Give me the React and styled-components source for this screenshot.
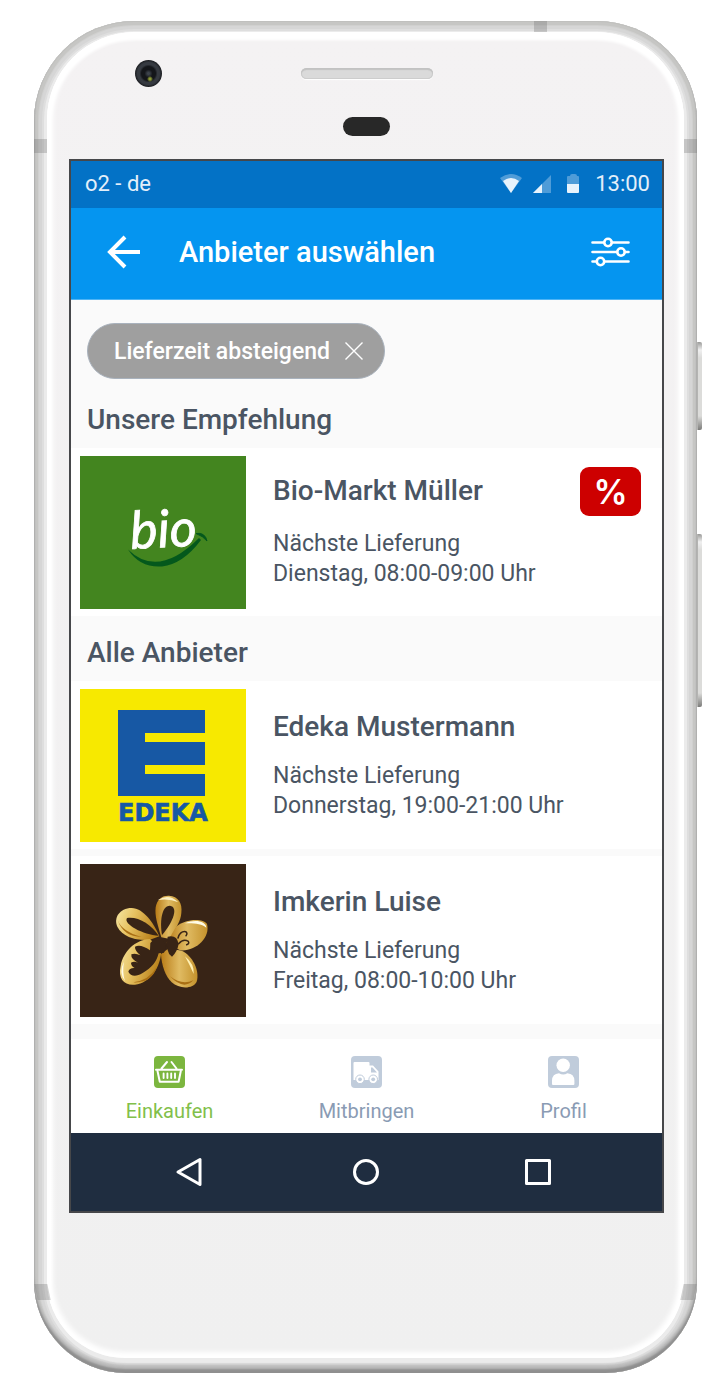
import React from 'react'
import styled, { createGlobalStyle, css } from 'styled-components'

const GlobalStyle = createGlobalStyle`
  * {
    box-sizing: border-box;
  }
  body {
    margin: 0;
    background: #fff;
    color: #4a5563;
    font-family: Roboto, 'Liberation Sans', sans-serif;
  }
  h1, h2, h3, p, ul {
    margin: 0;
    padding: 0;
    font-weight: 400;
  }
  ul {
    list-style: none;
  }
  svg {
    display: block;
  }
`

/* ---------- device ---------- */

const Phone = styled.div`
  position: relative;
  margin: 21px 23px 12px 34px;
  padding: 11px 13px 15px;
  border-radius: 100px 100px 92px 92px;
  background: #ebebeb;
  box-shadow: inset 0 -4px 2px #8f8f8f, inset 0 -8px 3px #b9b9b9,
    inset 0 0 0 1px #c0c0be, inset 0 0 0 4px #c6c6c4, inset 0 0 0 5px #d0d0cf,
    inset 0 0 0 8px #d6d6d6, inset 0 0 0 10px #dedede;
`

const Face = styled.div`
  padding: 0 20px 145px 22px;
  border-radius: 88px 88px 78px 78px;
  background: linear-gradient(#f4f2f3, #f0f0f0);
  box-shadow: inset 0 0 5px 6px #fff, inset 0 4px 3px 4px #fff;
`

const FaceTop = styled.div`
  display: grid;
  grid-template-columns: 1fr auto 1fr;
  align-items: center;
  height: 127px;
  padding-top: 28px;
  align-content: start;
  row-gap: 30px;
`

const Camera = styled.div`
  width: 27px;
  height: 27px;
  margin-left: 66px;
  border-radius: 50%;
  background: radial-gradient(circle at 15px 19px, #8c9a35 0 1px, transparent 3px),
    radial-gradient(
      circle,
      #3d434c 0 1px,
      #14161a 4px 7px,
      #363a41 9px 11px,
      #1f2125 13px
    );
`

const Speaker = styled.div`
  width: 132px;
  height: 11px;
  border-radius: 6px;
  background: #dadada;
  box-shadow: inset 0 2px 1px #c2c2c2, inset 0 0 0 1px #cdcdcd, 0 1px 1px #fff;
`

const Sensor = styled.div`
  grid-column: 2;
  justify-self: center;
  width: 47px;
  height: 19px;
  border-radius: 10px;
  background: #282828;
`

const Antenna = styled.div`
  position: absolute;
  background: rgba(110, 110, 110, 0.3);
  ${({ $edge }) =>
    $edge === 'top'
      ? css`
          top: 0;
          right: 150px;
          width: 13px;
          height: 11px;
        `
      : css`
          ${$edge}: 0;
          top: 118px;
          width: 13px;
          height: 14px;
        `}
`

const LowerAntenna = styled.div`
  position: absolute;
  bottom: 73px;
  ${({ $edge }) => $edge}: 2px;
  width: 13px;
  height: 16px;
  background: rgba(110, 110, 110, 0.3);
  transform: skewX(${({ $edge }) => ($edge === 'left' ? 12 : -12)}deg);
`

const SideKey = styled.div`
  position: absolute;
  left: 100%;
  top: ${({ $top }) => $top}px;
  width: 5px;
  height: ${({ $length }) => $length}px;
  border-radius: 0 2px 2px 0;
  background: linear-gradient(
    #9a9a98,
    #f0f0f0 8px,
    #dcdcda 16px,
    #dcdcda calc(100% - 14px),
    #b2b2b0 calc(100% - 8px),
    #7c7c7a
  );
  box-shadow: inset 1px 0 0 #b4b4b2;
`

const Screen = styled.div`
  border: 2px solid #46474a;
  background: #fafafa;
`

/* ---------- bars ---------- */

const StatusBar = styled.div`
  display: flex;
  align-items: center;
  height: 47px;
  padding: 0 12px 2px 14px;
  background: #0372c6;
  color: #e3effa;
  font-size: 22px;
`

const StatusIcons = styled.div`
  display: flex;
  align-items: center;
  gap: 11px;
  margin-left: auto;
  margin-right: 11px;
`

const Header = styled.header`
  display: flex;
  align-items: center;
  height: 92px;
  padding: 0 32px 4px 36px;
  border-bottom: 1px solid #4fb4f5;
  background: #0595f0;
  color: #fff;
`

const IconButton = styled.button`
  padding: 0;
  border: 0;
  background: none;
  color: inherit;
  cursor: pointer;
`

const Title = styled.h1`
  flex: 1;
  margin-left: 38px;
  font-size: 29px;
  font-weight: 500;
`

/* ---------- content ---------- */

const ChipRow = styled.div`
  display: flex;
  padding: 23px 16px 4px;
`

const Chip = styled.div`
  display: flex;
  align-items: center;
  gap: 15px;
  height: 56px;
  padding: 0 21px 0 26px;
  border: 1px solid #a9b2bd;
  border-radius: 28px;
  background: #9f9f9f;
  color: #fff;
  font-size: 23px;
  font-weight: 500;
`

const SectionTitle = styled.h2`
  padding: 21px 16px 12px;
  font-size: 28px;
  font-weight: 500;
  line-height: 32px;
`

const ProviderList = styled.ul`
  display: flex;
  flex-direction: column;
  gap: 7px;
`

const ProviderCard = styled.li`
  display: flex;
  align-items: center;
  gap: 27px;
  min-height: 168px;
  padding: 7px 9px;
  background: #fff;
`

const ProviderText = styled.div`
  display: flex;
  flex-direction: column;
  gap: ${({ $featured }) => ($featured ? 22 : 18)}px;
  padding-top: ${({ $featured }) => ($featured ? 0 : 2)}px;
`

const ProviderName = styled.h3`
  font-size: 28px;
  font-weight: 500;
  line-height: 32px;
`

const Delivery = styled.p`
  font-size: 23px;
  line-height: 30px;
`

const Badge = styled.span`
  display: flex;
  align-items: center;
  justify-content: center;
  align-self: flex-start;
  width: 61px;
  height: 49px;
  margin: 12px 12px 0 auto;
  border-radius: 9px;
  background: #cd0000;
  color: #fff;
  font-family: Inter, 'Noto Sans', sans-serif;
  font-size: 34px;
  font-weight: 600;
`

/* ---------- bottom ---------- */

const TabBar = styled.nav`
  display: grid;
  grid-template-columns: repeat(3, 1fr);
  height: 94px;
  margin-top: 15px;
  background: #fff;
`

const Tab = styled.a`
  display: flex;
  flex-direction: column;
  align-items: center;
  gap: 11px;
  padding-top: 17px;
  color: ${({ $active }) => ($active ? '#82bf4b' : '#8a9bb4')};
  font-size: 20px;
  line-height: 24px;
  text-decoration: none;
`

const SystemBar = styled.div`
  display: grid;
  grid-template-columns: 40% 20% 38%;
  align-items: center;
  justify-items: center;
  height: 78px;
  background: #1f2d40;
  color: #fff;
`

/* ---------- icons ---------- */

const WifiIcon = () => (
  <svg width="22" height="20" viewBox="0 0 22 20" aria-hidden="true">
    <path d="M0 4Q11 -4 22 4L11 19Z" fill="#4f9cd8" />
    <path d="M3 7Q11 1 19 7L11 19Z" fill="#e8f3fc" />
  </svg>
)

const SignalIcon = () => (
  <svg width="18" height="18" viewBox="0 0 18 18" aria-hidden="true">
    <path d="M0 18L18 0V18Z" fill="#4f9cd8" />
    <path d="M0 18L9 9V18Z" fill="#e8f3fc" />
  </svg>
)

const BatteryIcon = () => (
  <svg width="22" height="20" viewBox="0 0 22 20" aria-hidden="true">
    <path d="M5 3Q5 2 6 2H8Q8 0 10 0H13Q15 0 15 2H16Q17 2 17 3V11H5Z" fill="#4f9cd8" />
    <path d="M5 10H17V18Q17 19 16 19H6Q5 19 5 18Z" fill="#e8f3fc" />
  </svg>
)

const BackIcon = () => (
  <svg width="34" height="34" viewBox="0 0 34 34" fill="none" stroke="#fff" strokeWidth="4" aria-hidden="true">
    <path d="M18 2L3 17L18 32M3 17H33" />
  </svg>
)

const FilterIcon = () => (
  <svg width="39" height="30" viewBox="0 0 39 30" fill="#0595f0" stroke="#fff" strokeWidth="2.6" strokeLinecap="round" aria-hidden="true">
    <path d="M1.500 5.500H37.500M1.500 15H37.500M1.500 24.500H37.500" />
    <circle cx="17" cy="5.500" r="3.700" />
    <circle cx="30" cy="15" r="3.700" />
    <circle cx="9.500" cy="24.500" r="3.700" />
  </svg>
)

const CloseIcon = () => (
  <svg width="18" height="18" viewBox="0 0 18 18" stroke="#fff" strokeWidth="1.4" aria-hidden="true">
    <path d="M0.5 0.5L17.5 17.5M17.5 0.5L0.5 17.5" />
  </svg>
)

const BasketIcon = () => (
  <svg width="31" height="32" viewBox="0 0 31 32" aria-hidden="true">
    <rect width="31" height="32" rx="4" fill="#7cb63f" />
    <g fill="none" stroke="#fff" strokeWidth="2" strokeLinecap="round">
      <path d="M2 13.8H28M7.5 12.5L13 6M22.5 12.5L17.5 6" />
      <path d="M3.5 15L5.8 25.8H24.6L26.8 15" strokeLinejoin="round" />
      <path d="M9.6 17.5V22M13.4 17.5V22M17.2 17.5V22M21 17.5V22" strokeWidth="1.9" />
    </g>
  </svg>
)

const TruckIcon = () => (
  <svg width="31" height="32" viewBox="0 0 31 32" aria-hidden="true">
    <rect width="31" height="32" rx="4" fill="#c0ccdb" />
    <path d="M3.5 6H17.5Q18.5 6 18.5 7V9.5H22L27.5 15.5V24H2.500V7Q2.500 6 3.5 6Z" fill="#fff" />
    <path d="M20 11.5H21.5L26 16.5H20Z" fill="#c0ccdb" />
    <g fill="#fff" stroke="#c0ccdb">
      <circle cx="9" cy="23.300" r="4.300" />
      <circle cx="22.2" cy="23.300" r="4.300" />
    </g>
    <circle cx="9" cy="23.300" r="1.9" fill="#c0ccdb" />
    <circle cx="22.2" cy="23.300" r="1.9" fill="#c0ccdb" />
  </svg>
)

const ProfileIcon = () => (
  <svg width="31" height="32" viewBox="0 0 31 32" aria-hidden="true">
    <rect width="31" height="32" rx="4" fill="#c0ccdb" />
    <circle cx="15.2" cy="9.3" r="6.7" fill="#fff" />
    <path d="M4 28V24.5Q4.2 17.8 11 17.2Q15.2 20 19.4 17.2Q26.2 17.8 26.4 24.5V28Q26.4 29 25.4 29H5Q4 29 4 28Z" fill="#fff" />
  </svg>
)

const SystemIcon = ({ children }) => (
  <svg width="28" height="30" viewBox="0 0 28 30" fill="none" stroke="#fff" strokeWidth="3" strokeLinejoin="round" aria-hidden="true">
    {children}
  </svg>
)

/* ---------- logos ---------- */

const BioLogo = () => (
  <svg width="166" height="153" viewBox="0 0 166 153" role="img" aria-label="bio">
    <rect width="166" height="153" fill="#43851f" />
    <text
      x="51"
      y="93"
      fill="#fff"
      stroke="#fff"
      strokeWidth="0.8"
      fontFamily="Lato, sans-serif"
      fontSize="52"
      fontStyle="italic"
      fontWeight="400"
      transform="rotate(-3 51 93)"
    >
      bio
    </text>
    <path d="M48 93.500Q78 123 119 82L121 84Q103 108 82 110.500Q60 112 48 93.500Z" fill="#04581c" />
    <path d="M116 77.500Q125 76 127 85Q123 80 116 77.500Z" fill="#04581c" stroke="#04581c" />
  </svg>
)

const EdekaLogo = () => (
  <svg width="166" height="153" viewBox="0 0 166 153" role="img" aria-label="Edeka">
    <rect width="166" height="153" fill="#f7e900" />
    <rect x="38" y="21" width="87" height="86" fill="#1758a4" />
    <rect x="65" y="44" width="61" height="9" fill="#f7e900" />
    <rect x="65" y="76" width="61" height="9" fill="#f7e900" />
    <text
      x="83"
      y="132"
      fill="#1758a4"
      stroke="#1758a4"
      strokeWidth="0.6"
      fontFamily="'DejaVu Sans', sans-serif"
      fontSize="24"
      fontWeight="700"
      textAnchor="middle"
    >
      EDEKA
    </text>
  </svg>
)

const HoneyLogo = () => (
  <svg width="166" height="153" viewBox="30 25 498 459" role="img" aria-label="Imkerin Luise">
    <defs>
      <linearGradient id="gold" x1="0" y1="0" x2="1" y2="0.3">
        <stop offset="0" stopColor="#f6e7a4" />
        <stop offset="0.45" stopColor="#e6c160" />
        <stop offset="1" stopColor="#bb841e" />
      </linearGradient>
      <linearGradient id="goldDeep" x1="0" y1="0" x2="1" y2="0">
        <stop offset="0" stopColor="#b97c17" />
        <stop offset="0.5" stopColor="#e0bb63" />
        <stop offset="1" stopColor="#c4922c" />
      </linearGradient>
    </defs>
    <rect x="30" y="25" width="498" height="459" fill="#382416" />
    <path d="M274 245C262 205 254 180 257 155C262 128 278 119 297 120C325 122 338 142 334 172C332 196 320 212 300 250Z" fill="url(#goldDeep)" />
    <path d="M264 133Q296 112 325 140Q298 128 264 133Z" fill="#fbf0c4" />
    <path d="M276 238C270 205 272 150 300 150C325 154 312 195 276 238Z" fill="#382416" />
    <path d="M318 213C345 190 398 186 411 205C422 245 378 288 330 284L290 262Z" fill="url(#goldDeep)" />
    <path d="M345 203C375 190 408 196 409 216C395 204 372 202 345 203Z" fill="#fffbe6" />
    <path d="M268 242C250 200 220 158 185 157C148 157 130 188 142 213C158 246 205 256 240 252Z" fill="url(#gold)" />
    <path d="M143 194Q156 228 215 244Q160 243 143 194Z" fill="#a96f14" />
    <path d="M266 240C243 206 205 182 171 187C158 205 220 238 266 240Z" fill="#382416" />
    <path d="M240 250C195 252 160 288 152 330C143 370 163 390 195 387C240 382 272 335 274 285Z" fill="url(#gold)" />
    <path d="M190 380Q236 375 260 335Q245 383 190 380Z" fill="#a96f14" />
    <path d="M162 318Q145 350 165 376Q156 350 162 318Z" fill="#fffbe6" />
    <path d="M273 296L296 278L335 285C368 300 390 345 380 378C370 400 328 401 305 380C286 362 275 330 273 296Z" fill="url(#goldDeep)" />
    <path d="M300 362Q336 390 370 374Q340 405 300 362Z" fill="#a96f14" />
    <path d="M345 302Q374 326 371 355Q358 326 345 302Z" fill="#fff0b4" />
    <path
      d="M241 262Q258 242 277 252Q292 268 282 291L266 293C260 318 244 338 218 352C198 364 182 362 175 348Q178 336 194 337Q183 331 183 321Q192 316 204 321Q182 310 184 296Q196 291 211 299Q194 284 195 273Q212 264 240 284Z"
      fill="#382416"
    />
    <path d="M293 243Q320 236 326 264Q322 288 306 303Q284 288 293 243Z" fill="#382416" />
    <path d="M324 247Q330 226 347 228Q354 233 348 240M326 264Q340 248 355 257Q359 264 350 267" fill="none" stroke="#382416" strokeWidth="4.500" strokeLinecap="round" />
  </svg>
)

const recommended = {
  name: 'Bio-Markt Müller',
  slot: 'Dienstag, 08:00-09:00 Uhr',
  Logo: BioLogo
}

const providers = [
  { name: 'Edeka Mustermann', slot: 'Donnerstag, 19:00-21:00 Uhr', Logo: EdekaLogo },
  { name: 'Imkerin Luise', slot: 'Freitag, 08:00-10:00 Uhr', Logo: HoneyLogo }
]

const tabs = [
  { label: 'Einkaufen', href: '#einkaufen', Icon: BasketIcon, active: true },
  { label: 'Mitbringen', href: '#mitbringen', Icon: TruckIcon },
  { label: 'Profil', href: '#profil', Icon: ProfileIcon }
]

const Provider = ({ provider, featured }) => {
  const { name, slot, Logo } = provider

  return (
    <ProviderCard>
      <Logo />
      <ProviderText $featured={featured}>
        <ProviderName>{name}</ProviderName>
        <Delivery>
          Nächste Lieferung
          <br />
          {slot}
        </Delivery>
      </ProviderText>
      {featured && <Badge>%</Badge>}
    </ProviderCard>
  )
}

const App = () => (
  <>
    <GlobalStyle />
    <Phone>
      <Antenna $edge="top" />
      <Antenna $edge="left" />
      <Antenna $edge="right" />
      <LowerAntenna $edge="left" />
      <LowerAntenna $edge="right" />
      <SideKey $top={321} $length={88} />
      <SideKey $top={513} $length={173} />
      <Face>
        <FaceTop>
          <Camera />
          <Speaker />
          <span />
          <Sensor />
        </FaceTop>
        <Screen>
          <StatusBar>
            <span>o2 - de</span>
            <StatusIcons>
              <WifiIcon />
              <SignalIcon />
              <BatteryIcon />
            </StatusIcons>
            <span>13:00</span>
          </StatusBar>
          <Header>
            <IconButton type="button" aria-label="Zurück">
              <BackIcon />
            </IconButton>
            <Title>Anbieter auswählen</Title>
            <IconButton type="button" aria-label="Filter">
              <FilterIcon />
            </IconButton>
          </Header>
          <main>
            <ChipRow>
              <Chip>
                <span>Lieferzeit absteigend</span>
                <IconButton type="button" aria-label="Filter entfernen">
                  <CloseIcon />
                </IconButton>
              </Chip>
            </ChipRow>
            <SectionTitle>Unsere Empfehlung</SectionTitle>
            <ProviderList>
              <Provider provider={recommended} featured />
            </ProviderList>
            <SectionTitle>Alle Anbieter</SectionTitle>
            <ProviderList>
              {providers.map(provider => (
                <Provider key={provider.name} provider={provider} />
              ))}
            </ProviderList>
          </main>
          <TabBar>
            {tabs.map(({ label, href, Icon, active }) => (
              <Tab key={label} href={href} $active={active}>
                <Icon />
                {label}
              </Tab>
            ))}
          </TabBar>
          <SystemBar>
            <IconButton type="button" aria-label="Zurück">
              <SystemIcon>
                <path d="M25 2.500V27.500L3 15Z" />
              </SystemIcon>
            </IconButton>
            <IconButton type="button" aria-label="Startseite">
              <SystemIcon>
                <circle cx="14" cy="15" r="11.500" />
              </SystemIcon>
            </IconButton>
            <IconButton type="button" aria-label="Übersicht">
              <SystemIcon>
                <rect x="2.500" y="3.500" width="23" height="23" />
              </SystemIcon>
            </IconButton>
          </SystemBar>
        </Screen>
      </Face>
    </Phone>
  </>
)

export default App
